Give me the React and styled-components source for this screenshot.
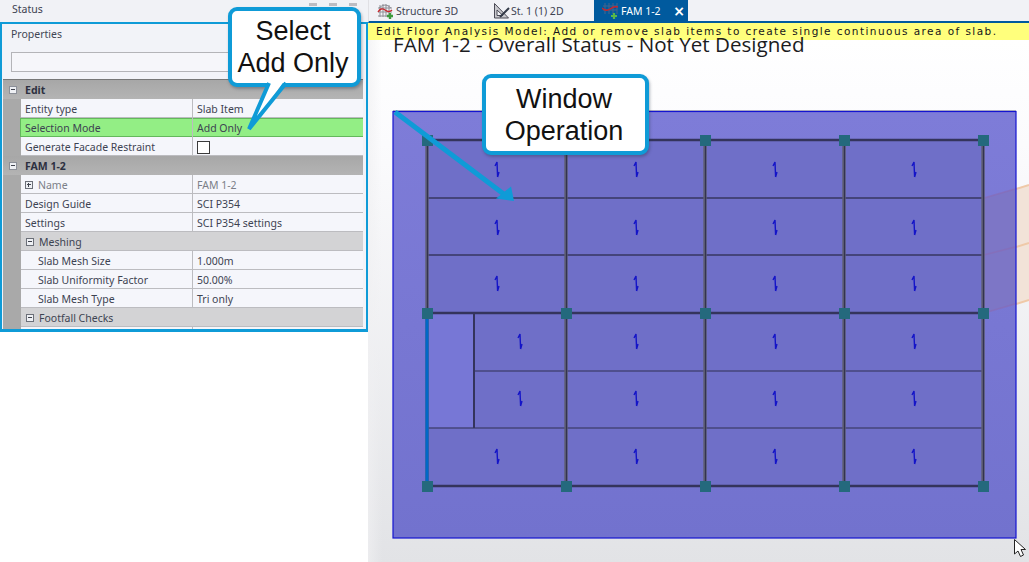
import React from "react";
import styled, { createGlobalStyle } from "styled-components";

const Global = createGlobalStyle`
  html, body { margin: 0; padding: 0; background: #fff; }
  body { width: 1029px; height: 562px; overflow: hidden; font-family: "Noto Sans", sans-serif; }
  #root { width: 1029px; height: 562px; }
`;

const Page = styled.div`
  position: relative;
  display: grid;
  grid-template-columns: 368px 661px;
  width: 1029px;
  height: 562px;
  overflow: hidden;
  background: #fff;
`;

const LeftColumn = styled.div`
  display: flex;
  flex-direction: column;
`;

const StatusBar = styled.div`
  height: 22px;
  display: flex;
  align-items: center;
  justify-content: space-between;
  padding: 0 11px 4px 12px;
  box-sizing: border-box;
  background: #f1f2f6;
  color: #3c4150;
  font: 10.5px "Noto Sans", sans-serif;
`;

const StatusIcons = styled.div`
  display: flex;
  gap: 12px;
  margin-top: -9px;
`;

const StatusIcon = styled.span`
  width: 8px;
  height: 3px;
  background: #bcbcc2;
`;

const PropertiesFrame = styled.section`
  height: 310px;
  box-sizing: border-box;
  display: flex;
  flex-direction: column;
  border: 2px solid #0f9bd7;
  border-bottom-width: 3px;
  background: #f2f3f8;
  overflow: hidden;
`;

const PanelTitle = styled.div`
  height: 28px;
  padding: 2px 0 0 9px;
  box-sizing: border-box;
  color: #414654;
  font: 10.5px/16px "Noto Sans", sans-serif;
`;

const SearchBox = styled.div`
  height: 20px;
  margin: 0 9px 7px 9px;
  box-sizing: border-box;
  border: 1px solid #b4b4b8;
  background: #f6f6fa;
`;

const PropGrid = styled.div`
  margin: 0 3px 0 1px;
  flex: 1;
  border-top: 1px solid #777;
  background: #a9a9a9;
  overflow: hidden;
  color: #3d4352;
  font: 10.5px/18px "Noto Sans", sans-serif;
`;

const GroupHeader = styled.div`
  height: 19px;
  display: flex;
  align-items: center;
  gap: 8px;
  padding-left: 6px;
  box-sizing: border-box;
  font-weight: 700;
  color: #2c3040;
  background: linear-gradient(#a7a7a7, #b4b4b4);
`;

const Expander = styled.span`
  flex: none;
  width: 8px;
  height: 8px;
  position: relative;
  box-sizing: border-box;
  border: 1px solid ${(p) => (p.$soft ? "#6b6f78" : "#8b8f98")};
  background: #eef0f4;
  &::before {
    content: "";
    position: absolute;
    left: 1px;
    right: 1px;
    top: 2px;
    height: 1px;
    background: #40444f;
  }
  &::after {
    content: "";
    display: ${(p) => (p.$plus ? "block" : "none")};
    position: absolute;
    top: 1px;
    bottom: 1px;
    left: 2px;
    width: 1px;
    background: #40444f;
  }
`;

const Row = styled.div`
  margin-left: 18px;
  height: 19px;
  box-sizing: border-box;
  display: grid;
  grid-template-columns: 172px 1fr;
  background: ${(p) => (p.$active ? "#93ee85" : "#f5f6fb")};
  border-bottom: 1px solid ${(p) => (p.$active ? "#63b85c" : "#bcbcc0")};
  box-shadow: ${(p) => (p.$active ? "inset 0 1px 0 #63b85c, -1px 0 0 #63b85c" : "none")};
  color: ${(p) => (p.$muted ? "#7b7f88" : "#3d4352")};
`;

const NameCell = styled.div`
  display: flex;
  align-items: center;
  gap: 5px;
  padding: 1px 0 0 ${(p) => (p.$indent ? 17 : 4)}px;
  border-right: 1px solid #bcbcc0;
  white-space: nowrap;
`;

const ValueCell = styled.div`
  display: flex;
  align-items: center;
  padding: 1px 0 0 4px;
  white-space: nowrap;
`;

const CheckBox = styled.span`
  width: 13px;
  height: 13px;
  box-sizing: border-box;
  border: 1px solid #3a3a3a;
  background: #fff;
`;

const SubHeader = styled.div`
  margin-left: 18px;
  height: 19px;
  box-sizing: border-box;
  display: flex;
  align-items: center;
  gap: 5px;
  padding: 1px 0 0 5px;
  background: #d3d3d5;
  border-bottom: 1px solid #bcbcc0;
`;

const RightColumn = styled.div`
  display: flex;
  flex-direction: column;
  min-width: 0;
`;

const TabStrip = styled.div`
  height: 23px;
  box-sizing: border-box;
  display: flex;
  background: #f1f2f6;
  border-bottom: 2px solid #005a9e;
  border-left: 1px solid #e0e0e4;
`;

const Tab = styled.div`
  width: ${(p) => p.$width}px;
  display: flex;
  align-items: center;
  gap: ${(p) => p.$gap}px;
  padding-left: ${(p) => p.$pad}px;
  box-sizing: border-box;
  background: ${(p) => (p.$active ? "#005a9e" : "transparent")};
  color: ${(p) => (p.$active ? "#fff" : "#3d4352")};
  font: 10.5px "Noto Sans", sans-serif;
`;

const TabClose = styled.span`
  margin-left: auto;
  margin-right: 3px;
  font: 700 14px "DejaVu Sans", sans-serif;
  color: #fff;
`;

const Banner = styled.div`
  height: 17px;
  flex: none;
  padding-left: 8px;
  box-sizing: border-box;
  background: #ffff7c;
  color: #15151a;
  white-space: nowrap;
  font: 10.5px/17px "DejaVu Sans", sans-serif;
  letter-spacing: 1.44px;
  position: relative;
`;

const Canvas = styled.div`
  flex: 1;
  min-height: 0;
  display: flex;
  flex-direction: column;
  background: linear-gradient(90deg, rgba(240,240,242,.7), rgba(255,255,255,0) 14px),
    linear-gradient(#ffffff, #fbfbfd 20%, #e2e3e6);
`;

const Title = styled.h1`
  position: relative;
  height: 62px;
  flex: none;
  margin: -9px 0 0;
  padding-left: 25px;
  box-sizing: content-box;
  color: #1c1c22;
  font: 400 20.6px/26px "Open Sans", sans-serif;
  white-space: nowrap;
`;

const ModelSvg = styled.svg`
  display: block;
  width: 661px;
  height: 469px;
  flex: none;
`;

const Callout = styled.div`
  position: absolute;
  left: ${(p) => p.$x}px;
  top: ${(p) => p.$y}px;
  width: ${(p) => p.$w}px;
  height: ${(p) => p.$h}px;
  box-sizing: border-box;
  display: flex;
  align-items: center;
  justify-content: center;
  text-align: center;
  padding-right: 3px;
  border: 4px solid #0f9bd7;
  border-radius: 9px;
  background: #fff;
  color: #111;
  box-shadow: 1px 2px 3px rgba(40, 50, 70, 0.35);
  font: 27px/32px "Liberation Sans", Arial, sans-serif;
`;

const CalloutTail = styled.svg`
  position: absolute;
  left: -7px;
  top: 69px;
  width: 70px;
  height: 60px;
  overflow: visible;
`;

const NAVY = "#1414c8";

function SlabGlyph({ x, y }) {
  return (
    <path
      d={`M${x - 2} ${y - 4} L${x} ${y - 8} L${x + 0.6} ${y + 7} M${x + 0.6} ${y + 7} L${x + 2} ${y + 2}`}
      fill="none"
      stroke={NAVY}
      strokeWidth="1.4"
    />
  );
}

const COLS = [427, 566, 705, 844, 983];
const GLYPHS = [];
[170, 228, 284, 457].forEach((y) => [497, 636, 775, 914].forEach((x) => GLYPHS.push([x, y])));
[342, 399].forEach((y) => [520, 636, 775, 914].forEach((x) => GLYPHS.push([x, y])));

function Model() {
  return (
    <ModelSvg viewBox="368 93 661 469">
      <defs>
        <linearGradient id="slabOuter" x1="0" y1="0" x2="0" y2="1">
          <stop offset="0" stopColor="#7e7cd8" />
          <stop offset="1" stopColor="#7272ce" />
        </linearGradient>
      </defs>
      <polygon points="1016,188 1029,185 1029,300 1016,304" fill="#f2e3d8" />
      <path d="M1016 189 L1029 185 M1016 247 L1029 243 M1016 304 L1029 300" stroke="#efc9a8" strokeWidth="2" />
      <line x1="393" y1="110.5" x2="1016" y2="110.5" stroke="#b8b8c0" />
      <rect x="393" y="111.5" width="623" height="426.5" fill="url(#slabOuter)" stroke="#1414d0" strokeWidth="1.2" />
      <polygon points="984,198 1015,189 1015,304 984,313" fill="#7d76c6" />
      <path d="M984 198 L1015 189 M984 255 L1015 247 M984 313 L1015 304" stroke="#8a6cb4" strokeWidth="1.5" opacity=".6" />
      <rect x="427" y="140" width="556" height="346" fill="#6f6fc8" />
      <rect x="428" y="313" width="46" height="115" fill="#7777d6" />
      {[198, 255].map((y) => (
        <line key={y} x1="427" y1={y} x2="983" y2={y} stroke="#44447a" strokeWidth="2" />
      ))}
      <line x1="474" y1="371" x2="983" y2="371" stroke="#44447a" strokeWidth="1.6" />
      <line x1="427" y1="428" x2="983" y2="428" stroke="#44447a" strokeWidth="1.6" />
      {[140, 313, 486].map((y) => (
        <line key={y} x1="427" y1={y} x2="983" y2={y} stroke="#34345c" strokeWidth="2.4" />
      ))}
      <line x1="474" y1="313" x2="474" y2="428" stroke="#34345c" strokeWidth="2" />
      {COLS.map((x) => (
        <React.Fragment key={x}>
          <line x1={x} y1="140" x2={x} y2="486" stroke="#5f5f74" strokeWidth="3.4" />
          <line x1={x + 0.5} y1="140" x2={x + 0.5} y2="486" stroke="#33334f" strokeWidth="1.2" />
        </React.Fragment>
      ))}
      <line x1="427" y1="318" x2="427" y2="482" stroke="#0068c8" strokeWidth="3.2" />
      {COLS.flatMap((x) =>
        [140, 313, 486].map((y) => <rect key={`${x}-${y}`} x={x - 5} y={y - 5} width="11" height="11" fill="#24697d" />)
      )}
      {GLYPHS.map(([x, y]) => (
        <SlabGlyph key={`${x}-${y}`} x={x} y={y} />
      ))}
      <line x1="395" y1="112" x2="505" y2="195" stroke="#0f9bd7" strokeWidth="5" />
      <polygon points="514,201 496,198.5 511,186.5" fill="#0f9bd7" />
      <path
        d="M1014.5 539.5 L1014.5 554 L1018 551 L1020.5 556.5 L1023.5 555 L1021 549.5 L1025.5 549.5 Z"
        fill="#fff"
        stroke="#222"
        strokeWidth="1"
      />
    </ModelSvg>
  );
}

function Structure3DIcon() {
  return (
    <svg width="17" height="18" viewBox="0 0 17 18">
      <path d="M2 6 Q8 0 14 6 M1 6h14M3 3v12M6 2v13M9 2v13M12 3v12M1 10h14M1 14h10" stroke="#8f8f96" strokeWidth="1" fill="none" />
      <path d="M1 10 Q4 5 8 8 T15 8" stroke="#c8262c" strokeWidth="1.4" fill="none" />
      <path d="M13 11v6M10 14h6" stroke="#3c9a3c" strokeWidth="2.4" />
    </svg>
  );
}

function SquareIcon() {
  return (
    <svg width="17" height="18" viewBox="0 0 17 18">
      <path d="M1.5 1.5 L1.5 16 L15.5 16 Z M4 8 L4 13.5 L10 13.5 Z" fill="#c9c9ce" fillRule="evenodd" stroke="#4a4a55" strokeWidth="1" />
      <path d="M7 15 L16 6" stroke="#333a48" strokeWidth="2" />
    </svg>
  );
}

function FamIcon() {
  return (
    <svg width="17" height="20" viewBox="0 0 17 20">
      <path d="M1 5h14M1 9h14M3 2v11M7 2v11M11 2v11M15 2v11" stroke="#46648c" strokeWidth="1" fill="none" />
      <path d="M0 7 Q4 11 8 8 T16 6" stroke="#c8262c" strokeWidth="1.4" fill="none" />
      <path d="M12 12v6M9 15h6" stroke="#58b848" strokeWidth="2.2" />
    </svg>
  );
}

export default function App() {
  return (
    <Page>
      <Global />
      <LeftColumn>
        <StatusBar>
          <span>Status</span>
          <StatusIcons>
            <StatusIcon />
            <StatusIcon />
            <StatusIcon />
          </StatusIcons>
        </StatusBar>
        <PropertiesFrame>
          <PanelTitle>Properties</PanelTitle>
          <SearchBox />
          <PropGrid>
            <GroupHeader>
              <Expander />
              <span>Edit</span>
            </GroupHeader>
            <Row>
              <NameCell>Entity type</NameCell>
              <ValueCell>Slab Item</ValueCell>
            </Row>
            <Row $active>
              <NameCell>Selection Mode</NameCell>
              <ValueCell>Add Only</ValueCell>
            </Row>
            <Row>
              <NameCell>Generate Facade Restraint</NameCell>
              <ValueCell>
                <CheckBox />
              </ValueCell>
            </Row>
            <GroupHeader>
              <Expander />
              <span>FAM 1-2</span>
            </GroupHeader>
            <Row $muted>
              <NameCell>
                <Expander $plus $soft />
                Name
              </NameCell>
              <ValueCell>FAM 1-2</ValueCell>
            </Row>
            <Row>
              <NameCell>Design Guide</NameCell>
              <ValueCell>SCI P354</ValueCell>
            </Row>
            <Row>
              <NameCell>Settings</NameCell>
              <ValueCell>SCI P354 settings</ValueCell>
            </Row>
            <SubHeader>
              <Expander $soft />
              Meshing
            </SubHeader>
            <Row>
              <NameCell $indent>Slab Mesh Size</NameCell>
              <ValueCell>1.000m</ValueCell>
            </Row>
            <Row>
              <NameCell $indent>Slab Uniformity Factor</NameCell>
              <ValueCell>50.00%</ValueCell>
            </Row>
            <Row>
              <NameCell $indent>Slab Mesh Type</NameCell>
              <ValueCell>Tri only</ValueCell>
            </Row>
            <SubHeader>
              <Expander $soft />
              Footfall Checks
            </SubHeader>
            <Row>
              <NameCell />
              <ValueCell />
            </Row>
          </PropGrid>
        </PropertiesFrame>
      </LeftColumn>
      <RightColumn>
        <TabStrip>
          <Tab $width={115} $pad={8} $gap={2}>
            <Structure3DIcon />
            Structure 3D
          </Tab>
          <Tab $width={110} $pad={9} $gap={1}>
            <SquareIcon />
            St. 1 (1) 2D
          </Tab>
          <Tab $active $width={94} $pad={8} $gap={2}>
            <FamIcon />
            FAM 1-2
            <TabClose>×</TabClose>
          </Tab>
        </TabStrip>
        <Banner>Edit Floor Analysis Model: Add or remove slab items to create single continuous area of slab.</Banner>
        <Canvas>
          <Title>FAM 1-2 - Overall Status - Not Yet Designed</Title>
          <Model />
        </Canvas>
      </RightColumn>
      <Callout $x={228} $y={7} $w={133} $h={80}>
        <div>
          Select
          <br />
          Add Only
        </div>
        <CalloutTail viewBox="225 80 70 60">
          <polygon points="269,80 285,80 249,129" fill="#fff" />
          <path d="M269 83 L249 129 L286 83" fill="none" stroke="#0f9bd7" strokeWidth="4" strokeLinejoin="miter" />
        </CalloutTail>
      </Callout>
      <Callout $x={482} $y={74} $w={167} $h={81}>
        <div>
          Window
          <br />
          Operation
        </div>
      </Callout>
    </Page>
  );
}
